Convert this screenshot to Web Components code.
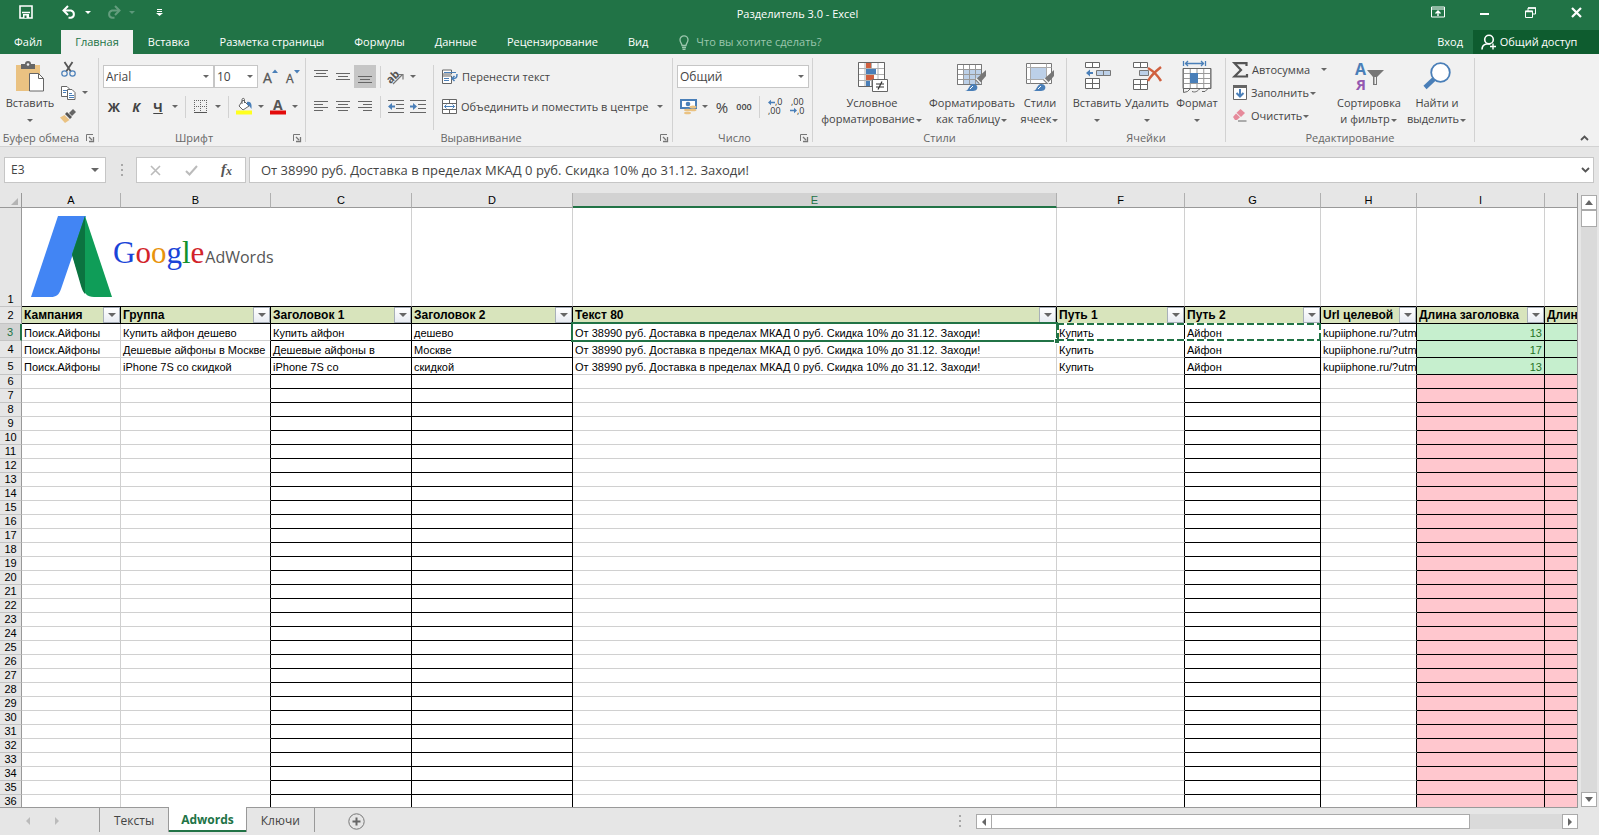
<!DOCTYPE html>
<html lang="ru">
<head>
<meta charset="utf-8">
<title>Разделитель 3.0 - Excel</title>
<style>
html, body { margin: 0; height: 100%; }
body { font: 11px/16px "Open Sans", "Noto Sans", sans-serif; color: #444; overflow: hidden; }
</style>
</head>
<body>
<excel-app></excel-app>
<script>
const BASE = `
  *, *::before, *::after { box-sizing: border-box; }
  button, input, select { font: inherit; color: inherit; margin: 0; padding: 0; border: 0; background: none; border-radius: 0; outline: 0; }
  button { display: inline-flex; align-items: center; justify-content: center; cursor: pointer; white-space: nowrap; }
`;
const define = (name, css, html) => customElements.define(name, class extends HTMLElement {
  constructor() { super(); this.attachShadow({ mode: 'open' }); }
  connectedCallback() {
    this.shadowRoot.innerHTML = `<style>${BASE}${css}</style>${typeof html === 'function' ? html(this) : html}`;
  }
});

/* ---------- icons: [width, height, markup] ---------- */
const grid = (x, y, cols, rows, w, h) => {
  let d = '';
  for (let i = 0; i <= cols; i++) d += `M${x + i * w} ${y}v${rows * h}`;
  for (let j = 0; j <= rows; j++) d += `M${x} ${y + j * h}h${cols * w}`;
  return d;
};
const lines = rows => rows.map(([x, y, w]) => `<path d="M${x} ${y}.5h${w}" stroke="#666"/>`).join('');
const brush = `<path d="M29 9v6l-7 8-4-4z" fill="#777"/><path d="M19 17.500l5 5" stroke="#f1f1f1" stroke-width="1.500"/><path d="M8 30c3 0 3-3 5-5 2-3 6-2 7 0s0 5-4 5z" fill="#4a7fb8"/><path d="M13 28l3-3" stroke="#fff"/>`;
const ICONS = {
  save: [14, 14, '<path d="M1 1h12v12H1z" fill="none" stroke="#fff" stroke-width="1.600"/><path d="M3 7.500h8" stroke="#fff" stroke-width="1.500"/><path d="M4 9h6v4H4z" fill="#fff"/><path d="M5.500 10.500h2V13h-2z" fill="#217346"/>'],
  undo: [15, 14, '<path d="M2 5.500h7a4 3.800 0 0 1 0 7.300H6.500" fill="none" stroke="#fff" stroke-width="2"/><path d="M6 1L1.500 5.500 6 10" fill="none" stroke="#fff" stroke-width="2"/>'],
  redo: [15, 14, '<g opacity=".3"><path d="M13 5.500H6a4 3.800 0 0 0 0 7.300h2.500" fill="none" stroke="#fff" stroke-width="2"/><path d="M9 1l4.500 4.500L9 10" fill="none" stroke="#fff" stroke-width="2"/></g>'],
  custom: [7, 7, '<path d="M1 .500h5M1 2.500h5" stroke="#fff"/><path d="M0 4h7L3.500 7z" fill="#fff"/>'],
  display: [14, 12, '<path d="M.500 1h13v10H.500zM.500 3h13" fill="none" stroke="#fff"/><path d="M7 10V5M4.500 7.500L7 5l2.500 2.500" fill="none" stroke="#fff" stroke-width="1.400"/>'],
  min: [10, 10, '<path d="M1 7h9" stroke="#fff" stroke-width="2"/>'],
  restore: [11, 11, '<path d="M.500 4h7v6.500h-7zM3 4V1h7.500v6H8" fill="none" stroke="#fff"/><path d="M3 1h8M0 4.500h8" stroke="#fff" stroke-width="1.500"/>'],
  close: [11, 11, '<path d="M1 1l9 9M10 1l-9 9" stroke="#fff" stroke-width="2.200"/>'],
  bulb: [10, 15, '<path d="M3 10.500C3 8.500 1 7.500 1 4.800a4 4 0 0 1 8 0c0 2.700-2 3.700-2 5.700zM3 12.500h4M3.500 14.300h3" fill="none" stroke="#9cc7ae" stroke-width="1.300"/>'],
  person: [16, 17, '<circle cx="8" cy="5.500" r="4.300" fill="none" stroke="#fff" stroke-width="1.600"/><path d="M1 15.500c0-3 2-5 4.500-5.500h4" fill="none" stroke="#fff" stroke-width="1.600"/><path d="M12 9.500v6M9 12.500h6" stroke="#fff" stroke-width="1.400"/>'],
  paste: [30, 32, '<path d="M1 4h24v26H1z" fill="#eac282"/><path d="M6 3h4a3 3 0 0 1 6 0h4v5H6z" fill="#666"/><circle cx="13" cy="3.500" r="1.300" fill="#f1f1f1"/><path d="M14.500 12.500h9l5 5v12.500h-14z" fill="#fff" stroke="#666"/><path d="M23.500 12.500v5h5" fill="none" stroke="#666"/>'],
  cut: [15, 15, '<path d="M3.500 0L9.800 9.500M11.500 0L5.200 9.500" stroke="#555" stroke-width="1.800"/><circle cx="3.500" cy="11.500" r="2.700" fill="none" stroke="#4a7fb8" stroke-width="1.200"/><circle cx="11.500" cy="11.500" r="2.700" fill="none" stroke="#4a7fb8" stroke-width="1.200"/>'],
  copy: [15, 14, '<path d="M.500.500h5.500l3 3v7H.500z" fill="#fff" stroke="#666"/><path d="M2 4.500h4M2 6.500h3" stroke="#4a7fb8"/><path d="M6.500 3.500H11l3 3v7H6.500z" fill="#fff" stroke="#666"/><path d="M8 7.500h3M8 9.500h5M8 11.500h5" stroke="#4a7fb8"/>'],
  painter: [16, 14, '<path d="M13 0l3 3-4 4-3-3z" fill="#666"/><path d="M7 3l5 5-2 2-5-5z" fill="#555"/><path d="M4.500 6l5 5-4.500 3L0 8.500z" fill="#eac282"/>'],
  grow: [15, 16, '<path d="M10 4l3-3.500L16 4z" fill="#4a7fb8"/><text x="1" y="14" font-size="14" fill="#555" stroke="#555" stroke-width=".3">A</text>'],
  shrink: [14, 16, '<path d="M10 1h6l-3 3.500z" fill="#4a7fb8"/><text x="2" y="14" font-size="12" fill="#555" stroke="#555" stroke-width=".3">A</text>'],
  borders: [14, 14, '<path d="M.500 0v13M6.500 0v13M12.500 0v13M0 .500h13M0 6.500h13" fill="none" stroke="#666" stroke-dasharray="1 1"/><path d="M0 12.500h13" stroke="#555"/>'],
  fill: [17, 17, '<path d="M7 2l6 6-6 4-4-4z" fill="#fff" stroke="#666"/><path d="M6 6V1.500C6 0 8.500 0 8.500 1.500V5" fill="none" stroke="#666"/><path d="M11 4c4-1 5 2 4.500 7C14 9 13 7 11 7z" fill="#4a7fb8"/><path d="M0 12.500h16v4H0z" fill="#ffff1e"/>'],
  color: [16, 17, '<text x="3" y="12" font-size="14" font-weight="bold" fill="#555">A</text><path d="M0 12.500h16v4H0z" fill="#e30b0b"/>'],
  alTop: [14, 14, lines([[0, 0, 14], [2, 3, 10], [0, 6, 14]])],
  alMid: [14, 14, lines([[0, 3, 14], [2, 6, 10], [0, 9, 14]])],
  alBot: [14, 14, lines([[0, 6, 14], [2, 9, 10], [0, 12, 14]])],
  left: [14, 14, lines([[0, 1, 14], [0, 4, 9], [0, 7, 14], [0, 10, 9]])],
  center: [14, 14, lines([[0, 1, 14], [2, 4, 10], [0, 7, 14], [2, 10, 10]])],
  right: [14, 14, lines([[0, 1, 14], [5, 4, 9], [0, 7, 14], [5, 10, 9]])],
  orient: [18, 16, '<text x="0" y="11" font-size="11" font-weight="bold" fill="#555" transform="rotate(-45 7 9)">ab</text><path d="M6 15l9-9M11 5.500h5v5" fill="none" stroke="#777" stroke-width="1.200"/>'],
  outdent: [17, 14, lines([[0, 0, 16], [8, 4, 8], [8, 8, 8], [0, 12, 16]]) + '<path d="M0 6.500L4 3v2.500h3v2H4V10z" fill="#4a7fb8"/>'],
  indent: [17, 14, lines([[0, 0, 16], [8, 4, 8], [8, 8, 8], [0, 12, 16]]) + '<path d="M7 6.500L3 3v2.500H0v2h3V10z" fill="#4a7fb8"/>'],
  wrap: [16, 16, '<path d="M.500 1v13.500h9V7h-9M.500 1h9v4h-9" fill="#fff" stroke="#666"/><path d="M2 3.500h12M2 9.500h5M2 11.500h5" stroke="#4a7fb8"/><path d="M15 5c0 4-1 4.500-4.500 4.500M12.500 7L10 9.500l2.500 2.500" fill="none" stroke="#4a7fb8" stroke-width="1.500"/>'],
  merge: [15, 15, '<path d="M.500.500h14v14H.500zM.500 4.500h14M.500 10.500h14M7.500.500v4M7.500 10.500v4" fill="#fff" stroke="#666"/><path d="M2.500 7.500h10M4.500 5.500l-2 2 2 2M10.500 5.500l2 2-2 2" fill="none" stroke="#4a7fb8"/>'],
  money: [17, 16, '<path d="M1 1h15v8H1z" fill="#fff" stroke="#4a7fb8" stroke-width="2"/><circle cx="8" cy="5" r="2.300" fill="#4a7fb8"/><ellipse cx="13" cy="8" rx="3.500" ry="1.500" fill="#eac282"/><ellipse cx="13" cy="11" rx="3.500" ry="1.300" fill="#eac282"/><ellipse cx="7.500" cy="11" rx="3.500" ry="1.300" fill="#eac282"/><ellipse cx="7.500" cy="14" rx="3.500" ry="1.300" fill="#eac282"/>'],
  decInc: [15, 15, '<path d="M0 3.500L3 .800v1.900h4v1.600H3v1.900z" fill="#4a7fb8"/><text x="7" y="6" font-size="9" fill="#333">,0</text><text x="0" y="15" font-size="9" fill="#333">,00</text>'],
  decDec: [15, 15, '<text x="1" y="6" font-size="9" fill="#333">,00</text><path d="M7 11.500L4 8.800v1.900H0v1.600h4v1.900z" fill="#4a7fb8"/><text x="7" y="15" font-size="9" fill="#333">,0</text>'],
  cond: [32, 32, `<path d="M2 2h26v24H2z" fill="#fff"/><path d="${grid(2.5, 1.5, 4, 4, 6.5, 6)}" fill="none" stroke="#b0b0b0"/><path d="M2.500 1.500h26v24h-26z" fill="none" stroke="#666"/><path d="M10 2h5v5h-5zM10 14h8v5h-8z" fill="#d0603f"/><path d="M10 8h10v5H10zM10 20h4v5h-4z" fill="#4a7fb8"/><path d="M16.500 18.500h15v12h-15z" fill="#fff" stroke="#666"/><path d="M20 23h8M20 26h8M26 20.500l-4 8" stroke="#333" stroke-width="1.200"/>`],
  table: [30, 32, `<path d="M.500 3.500h24v20h-24z" fill="#fff"/><path d="M7 9h18v15H7z" fill="#bcd0e8"/><path d="${grid(0.5, 3.5, 4, 4, 6, 5)}" fill="none" stroke="#999"/><path d="M.500 3.500h24v20h-24z" fill="none" stroke="#777"/>${brush}`],
  cells: [30, 32, `<path d="M1.500 2.500h25v20h-25z" fill="#fff" stroke="#777"/><path d="M1.500 6.500h25M1.500 18.500h25M5.500 2.500v20M21.500 2.500v20" stroke="#aaa"/><path d="M6 7h15v11H6z" fill="#bcd0e8"/>${brush}`],
  insert: [28, 32, `<path d="M2 1h15v6H2zM2 17h15v11H2z" fill="#fff"/><path d="${grid(2.5, 1.5, 2, 1, 7, 5)}${grid(2.5, 17.5, 2, 2, 7, 5)}" fill="none" stroke="#666"/><path d="M13.500 9.500h14v5h-14z" fill="#bcd0e8" stroke="#777"/><path d="M20.500 9.500v5" stroke="#777"/><path d="M3 12l4-3.500v2.500h3v2H7v2.500z" fill="#4a7fb8"/>`],
  remove: [30, 32, `<path d="M1 1h15v6H1zM1 18h15v11H1z" fill="#fff"/><path d="${grid(1.500, 1.500, 2, 1, 7, 5)}${grid(1.500, 18.500, 2, 2, 7, 5)}" fill="none" stroke="#666"/><path d="M7.500 9.500h9v5h-9z" fill="#bcd0e8" stroke="#777"/><path d="M16 7c5 3 10 8 13 13M29 6c-5 4-10 8-13 14" fill="none" stroke="#d0603f" stroke-width="2.500"/>`],
  format: [30, 32, `<path d="M1.500 0v5M23.500 0v5M3 2.500h19M6 0L3.500 2.500 6 5M19 0l2.500 2.500L19 5" fill="none" stroke="#4a7fb8" stroke-width="1.300"/><path d="M1.500 7.500h27v20h-27z" fill="#fff"/><path d="${grid(1.5, 7.5, 4, 4, 6.75, 5)}" fill="none" stroke="#999"/><path d="M8 12h8v10H8z" fill="#4a7fb8"/><path d="M1 27.500h28v-20H1zM1.500 27v4.500l4-1 3-3M10 30.500c4 1.500 6-1 8-3M20 30.500h3l4-4" fill="none" stroke="#666"/>`],
  sigma: [15, 16, '<path d="M13.500 4V1.200H1.500L8 8l-6.500 6.500h12.500V12" fill="none" stroke="#555" stroke-width="2.200"/>'],
  filldown: [14, 15, '<path d="M.500.500h13v14H.500z" fill="#fff" stroke="#666"/><path d="M0 0h14v3H0z" fill="#666"/><path d="M7 4v7M3.500 8L7 11.500 10.500 8" fill="none" stroke="#4a7fb8" stroke-width="2"/>'],
  eraser: [14, 13, '<path d="M7.500 0L12 4 8 8 3.500 3.800z" fill="#e68a9b"/><path d="M3 4.500L7 8.300 4 11H2L0 8z" fill="#e68a9b"/><path d="M5 12h8.500" stroke="#666"/>'],
  sort: [30, 32, '<text x="1" y="14" font-size="16" font-weight="bold" fill="#4a7fb8">А</text><text x="2" y="29" font-size="15" font-weight="bold" fill="#9458b0">Я</text><path d="M13 9h17l-7 7v8h-4v-8z" fill="#777"/><path d="M20.500 16h1.500v7h-1.500z" fill="#f1f1f1"/>'],
  find: [28, 32, '<circle cx="17.500" cy="11.500" r="9.300" fill="#fff" stroke="#4a7fb8" stroke-width="1.800"/><path d="M11 18l-9 8.500" stroke="#4a7fb8" stroke-width="4.500"/>'],
  launcher: [8, 8, '<path d="M.500 7V.500H7" fill="none" stroke="#777"/><path d="M3 3l3 3M7.500 3v4.500H3" fill="none" stroke="#777" stroke-width="1.300"/>'],
  collapse: [9, 6, '<path d="M1 5l3.500-3.500L8 5" fill="none" stroke="#555" stroke-width="1.800"/>'],
  expand: [9, 6, '<path d="M1 1l3.500 3.500L8 1" fill="none" stroke="#555" stroke-width="1.800"/>'],
  cancel: [11, 11, '<path d="M1 1l9 9M10 1l-9 9" stroke="#bbb" stroke-width="1.600"/>'],
  ok: [13, 11, '<path d="M1 6l3.500 3.500L12 1" fill="none" stroke="#bbb" stroke-width="2"/>'],
  fx: [14, 16, '<text x="1" y="12" font-family="Liberation Serif, serif" font-size="15" font-style="italic" font-weight="bold" fill="#555">f</text><text x="6" y="13" font-family="Liberation Serif, serif" font-size="12" font-style="italic" font-weight="bold" fill="#555">x</text>'],
  dots: [3, 12, '<path d="M1 0h2v2H1zM1 5h2v2H1zM1 10h2v2H1z" fill="#a8a8a8"/>'],
  corner: [7, 7, '<path d="M7 0v7H0z" fill="#b4b4b4"/>'],
  tLeft: [4, 8, '<path d="M4 0v8L0 4z" fill="currentColor"/>'],
  tRight: [4, 8, '<path d="M0 0v8l4-4z" fill="currentColor"/>'],
  tUp: [8, 5, '<path d="M0 5h8L4 0z" fill="currentColor"/>'],
  tDown: [8, 5, '<path d="M0 0h8L4 5z" fill="currentColor"/>'],
  plus: [17, 17, '<circle cx="8.500" cy="8.500" r="7.700" fill="none" stroke="#777"/><path d="M8.500 4.500v8M4.500 8.500h8" stroke="#666" stroke-width="2"/>'],
  adwords: [82, 82, '<path d="M27 0h28L42 38 30 73c-2 6-5 8-10 8H0z" fill="#4285f4"/><path d="M54 0l27 81H63c-7 0-10-4-12-10L41 38z" fill="#0f9d58"/><path d="M54 0v78c-2-2-3-5-4-8L41 39z" fill="#0b7340"/>']
};
define('xl-icon', ':host{display:inline-flex;flex:none} svg{display:block;overflow:visible}', el => {
  const [w, h, body] = ICONS[el.getAttribute('name')];
  return `<svg width="${w}" height="${h}" viewBox="0 0 ${w} ${h}" aria-hidden="true">${body}</svg>`;
});
define('xl-caret', `:host{display:inline-block;flex:none;vertical-align:middle;border:3px solid transparent;border-top-color:#666;border-bottom:0;margin:0 1px}`, '');

/* ---------- title bar and tabs ---------- */
define('title-bar', `
  :host { display: grid; grid-template-columns: 1fr auto 1fr; align-items: center; height: 30px; background: #217346; color: #fff; }
  .quick { display: flex; align-items: center; padding: 0 0 6px 15px; }
  .quick button { width: 22px; height: 24px; }
  .quick .gap { margin-left: 21px; } .quick .arrow { width: 12px; margin-left: 2px; } .quick .near { margin-left: 8px; }
  .quick .last { margin-left: 10px; }
  xl-caret { border-top-color: #fff; } .dim xl-caret { border-top-color: #5d987a; }
  .win { display: flex; justify-content: flex-end; padding-bottom: 6px; }
  .win button { width: 46px; height: 24px; }
  h1 { margin: 0; font: inherit; padding: 0 4px 3px 0; }
`, `
  <div class="quick">
    <button aria-label="Сохранить"><xl-icon name="save"></xl-icon></button>
    <button class="gap" aria-label="Отменить"><xl-icon name="undo"></xl-icon></button>
    <button class="arrow" aria-label="Список отмены"><xl-caret></xl-caret></button>
    <button class="near" aria-label="Вернуть"><xl-icon name="redo"></xl-icon></button>
    <button class="arrow dim" aria-label="Список возврата"><xl-caret></xl-caret></button>
    <button class="last" aria-label="Настройка панели"><xl-icon name="custom"></xl-icon></button>
  </div>
  <h1>Разделитель 3.0 - Excel</h1>
  <div class="win">
    <button aria-label="Параметры ленты"><xl-icon name="display"></xl-icon></button>
    <button aria-label="Свернуть"><xl-icon name="min"></xl-icon></button>
    <button aria-label="Восстановить"><xl-icon name="restore"></xl-icon></button>
    <button aria-label="Закрыть"><xl-icon name="close"></xl-icon></button>
  </div>`);
define('ribbon-tabs', `
  :host { display: flex; height: 24px; background: #217346; color: #fff; }
  nav { display: flex; }
  nav button { padding: 0 15px; }
  nav button:first-child { padding: 0 19px 0 14px; }
  nav .on { background: #f1f1f1; color: #217346; padding: 0 14px; }
  label { display: flex; align-items: center; gap: 7px; padding-left: 16px; flex: 1; }
  input { flex: 1; min-width: 0; max-width: 220px; } input::placeholder { color: #9cc7ae; opacity: 1; }
  .in { padding: 0 10px; } .share { width: 126px; background: #0e5c2f; gap: 3px; padding-right: 14px; }
`, `
  <nav role="tablist"><button role="tab">Файл</button><button role="tab" class="on" aria-selected="true">Главная</button><button role="tab">Вставка</button><button role="tab">Разметка страницы</button><button role="tab">Формулы</button><button role="tab">Данные</button><button role="tab">Рецензирование</button><button role="tab">Вид</button></nav>
  <label><xl-icon name="bulb"></xl-icon><input placeholder="Что вы хотите сделать?" aria-label="Что вы хотите сделать?"></label>
  <button class="in">Вход</button>
  <button class="share"><xl-icon name="person"></xl-icon>Общий доступ</button>`);

/* ---------- ribbon parts ---------- */
define('ribbon-group', `
  :host { display: flex; flex: none; height: 92px; }
  section { flex: 1; min-width: 0; display: flex; flex-direction: column; padding-top: 4px; }
  .body { flex: 1; display: flex; align-items: flex-start; }
  footer { display: flex; align-items: center; height: 16px; color: #666; }
  span { flex: 1; text-align: center; white-space: nowrap; }
  footer button { width: 16px; height: 16px; }
  i { width: 1px; margin: 4px 0; background: #d2d2d2; }
`, el => `<section><div class="body"><slot></slot></div><footer><span>${el.getAttribute('label')}</span>${
  el.hasAttribute('launcher') ? '<button aria-label="Параметры"><xl-icon name="launcher"></xl-icon></button>' : ''}</footer></section><i></i>`);
define('tool-button', `
  :host { display: inline-flex; flex: none; width: 22px; height: 23px; }
  :host([pressed]) { background: #c6c6c6; }
  :host([wide]) { width: auto; }
  button { width: 100%; gap: 4px; }
`, el => `<button aria-label="${el.getAttribute('tip') || ''}"><slot></slot></button>`.replace(' aria-label=""', ''));
define('big-button', `
  :host { display: block; flex: none; }
  button { width: 100%; flex-direction: column; justify-content: flex-start; padding-top: 3px; text-align: center; }
  .icon { display: flex; height: 34px; }
`, el => `<button><span class="icon"><xl-icon name="${el.getAttribute('icon')}"></xl-icon></span><span><slot></slot></span></button>`);
define('combo-box', `
  :host { display: flex; flex: none; position: relative; height: 23px; background: #fff; border: 1px solid #c6c6c6; }
  select { flex: 1; appearance: none; padding: 0 4px 0 2px; width: 100%; font-size: 12px; }
  xl-caret { position: absolute; right: 3px; top: 9px; pointer-events: none; }
`, el => `<select aria-label="${el.getAttribute('tip')}"><option>${el.getAttribute('value')}</option></select><xl-caret></xl-caret>`);

const tool = (icon, tip, attr = '') => `<tool-button tip="${tip}" ${attr}><xl-icon name="${icon}"></xl-icon></tool-button>`;
const drop = tip => `<tool-button class="drop" tip="${tip}"><xl-caret></xl-caret></tool-button>`;
define('ribbon-bar', `
  :host { display: flex; height: 93px; background: #f1f1f1; border-bottom: 1px solid #d2d2d2; }
  .drop { width: 12px; }
  .stack { display: flex; flex-direction: column; align-items: flex-start; }
  .rows { display: flex; flex-direction: column; gap: 7px; padding: 7px 0 0 4px; }
  .row { display: flex; align-items: center; }
  .bar { width: 1px; height: 22px; margin: 0 4px; background: #d2d2d2; }
  .tall { height: auto; align-self: stretch; margin: 7px 4px 0; }
  .letter { font-size: 13px; } b, u, em { font-weight: bold; }
  .clip { width: 99px; } .font { width: 207px; } .align { width: 367px; } .num { width: 140px; }
  .styles { width: 254px; } .cells { width: 159px; } .edit { width: 249px; }
  .paste { width: 57px; padding-left: 3px; } .w110 { width: 110px; } .w90 { width: 90px; } .w44 { width: 46px; } .w50 { width: 50px; } .w70 { width: 70px; } .w66 { width: 66px; }
  .pad { padding-left: 4px; display: flex; } .cells .pad { padding-left: 5px; }
  .tools { width: 104px; padding-left: 3px; } .name { width: 111px; } .size { width: 44px; } .fmt { width: 132px; }
  .pct { font-size: 15px; } .thousand { font-size: 9px; font-weight: 600; }
  .mergedrop { margin-left: 6px; } .sum { margin-left: 8px; }
  .end { flex: 1; display: flex; justify-content: flex-end; align-items: flex-end; padding-right: 5px; }
  .end button { width: 20px; height: 16px; }
`, `
  <ribbon-group class="clip" label="Буфер обмена" launcher>
    <big-button class="paste" icon="paste">Вставить<br><xl-caret></xl-caret></big-button>
    <div class="stack">${tool('cut', 'Вырезать')}<div class="row">${tool('copy', 'Копировать')}${drop('Копировать')}</div>${tool('painter', 'Формат по образцу')}</div>
  </ribbon-group>
  <ribbon-group class="font" label="Шрифт" launcher><div class="rows">
    <div class="row"><combo-box class="name" value="Arial" tip="Шрифт"></combo-box><combo-box class="size" value="10" tip="Размер"></combo-box>${tool('grow', 'Увеличить')}${tool('shrink', 'Уменьшить')}</div>
    <div class="row"><tool-button class="letter"><b>Ж</b></tool-button><tool-button class="letter"><em>К</em></tool-button><tool-button class="letter"><u>Ч</u></tool-button>${drop('Подчёркивание')}<span class="bar"></span>${tool('borders', 'Границы')}${drop('Границы')}<span class="bar"></span>${tool('fill', 'Заливка')}${drop('Заливка')}${tool('color', 'Цвет текста')}${drop('Цвет текста')}</div>
  </div></ribbon-group>
  <ribbon-group class="align" label="Выравнивание" launcher>
    <div class="rows">
      <div class="row">${tool('alTop', 'По верхнему краю')}${tool('alMid', 'По середине')}${tool('alBot', 'По нижнему краю', 'pressed')}<span class="bar"></span>${tool('orient', 'Ориентация')}${drop('Ориентация')}</div>
      <div class="row">${tool('left', 'Слева')}${tool('center', 'По центру')}${tool('right', 'Справа')}<span class="bar"></span>${tool('outdent', 'Уменьшить отступ')}${tool('indent', 'Увеличить отступ')}</div>
    </div>
    <span class="bar tall"></span>
    <div class="rows">
      <div class="row"><tool-button wide><xl-icon name="wrap"></xl-icon>Перенести текст</tool-button></div>
      <div class="row"><tool-button wide><xl-icon name="merge"></xl-icon>Объединить и поместить в центре</tool-button><span class="mergedrop"></span>${drop('Объединить')}</div>
    </div>
  </ribbon-group>
  <ribbon-group class="num" label="Число" launcher><div class="rows">
    <combo-box class="fmt" value="Общий" tip="Числовой формат"></combo-box>
    <div class="row">${tool('money', 'Финансовый формат')}${drop('Финансовый формат')}<tool-button class="pct">%</tool-button><tool-button class="thousand">000</tool-button><span class="bar"></span>${tool('decInc', 'Увеличить разрядность')}${tool('decDec', 'Уменьшить разрядность')}</div>
  </div></ribbon-group>
  <ribbon-group class="styles" label="Стили"><div class="pad">
    <big-button class="w110" icon="cond">Условное<br>форматирование<xl-caret></xl-caret></big-button>
    <big-button class="w90" icon="table">Форматировать<br>как таблицу<xl-caret></xl-caret></big-button>
    <big-button class="w44" icon="cells">Стили<br>ячеек<xl-caret></xl-caret></big-button>
  </div></ribbon-group>
  <ribbon-group class="cells" label="Ячейки"><div class="pad">
    <big-button class="w50" icon="insert">Вставить<br><xl-caret></xl-caret></big-button>
    <big-button class="w50" icon="remove">Удалить<br><xl-caret></xl-caret></big-button>
    <big-button class="w50" icon="format">Формат<br><xl-caret></xl-caret></big-button>
  </div></ribbon-group>
  <ribbon-group class="edit" label="Редактирование">
    <div class="pad"><div class="stack tools">
      <div class="row"><tool-button wide><xl-icon name="sigma"></xl-icon>Автосумма</tool-button><span class="sum"></span>${drop('Автосумма')}</div>
      <tool-button wide><xl-icon name="filldown"></xl-icon><span>Заполнить<xl-caret></xl-caret></span></tool-button>
      <tool-button wide><xl-icon name="eraser"></xl-icon><span>Очистить<xl-caret></xl-caret></span></tool-button>
    </div>
    <big-button class="w70" icon="sort">Сортировка<br>и фильтр<xl-caret></xl-caret></big-button>
    <big-button class="w66" icon="find">Найти и<br>выделить<xl-caret></xl-caret></big-button></div>
  </ribbon-group>
  <div class="end"><button aria-label="Свернуть ленту"><xl-icon name="collapse"></xl-icon></button></div>`);

/* ---------- formula bar ---------- */
define('formula-bar', `
  :host { display: flex; align-items: flex-start; height: 46px; padding: 10px 5px 0 4px; background: #e6e6e6; font-size: 13px; }
  .box { display: flex; align-items: center; height: 26px; background: #fff; border: 1px solid #c6c6c6; }
  .name { width: 102px; } .name input { flex: 1; min-width: 0; padding-left: 6px; font-size: 12px; } .name button { width: 20px; height: 24px; }
  .name xl-caret { border-width: 4px 4px 0; }
  .grip { display: flex; width: 30px; height: 26px; align-items: center; justify-content: center; }
  .fx { width: 110px; margin-right: 3px; justify-content: space-around; } .fx button { width: 30px; height: 24px; }
  .text { flex: 1; min-width: 0; } .text input { flex: 1; min-width: 0; padding-left: 11px; } .text button { width: 16px; height: 24px; }
`, `
  <div class="box name"><input value="E3" aria-label="Имя"><button aria-label="Список имён"><xl-caret></xl-caret></button></div>
  <span class="grip"><xl-icon name="dots"></xl-icon></span>
  <div class="box fx"><button aria-label="Отмена"><xl-icon name="cancel"></xl-icon></button><button aria-label="Ввод"><xl-icon name="ok"></xl-icon></button><button aria-label="Вставить функцию"><xl-icon name="fx"></xl-icon></button></div>
  <div class="box text"><input aria-label="Строка формул" value="От 38990 руб. Доставка в пределах МКАД 0 руб. Скидка 10% до 31.12. Заходи!"><button aria-label="Развернуть"><xl-icon name="expand"></xl-icon></button></div>`);

/* ---------- worksheet ---------- */
define('adwords-logo', `
  :host { display: flex; height: 98px; padding: 8px 0 0 9px; color: #555; white-space: nowrap; }
  p { display: flex; align-items: baseline; gap: 1px; margin: 19px 0 0; line-height: 36px; }
  .g { font-family: "Liberation Serif", serif; font-size: 31px; } .w { font: 16px "Open Sans", sans-serif; }
  .b { color: #1a44d8; } .r { color: #d2232a; } .y { color: #e8930c; } .n { color: #12922b; }
`, `<xl-icon name="adwords"></xl-icon><p><span class="g"><span class="b">G</span><span class="r">o</span><span class="y">o</span><span class="b">g</span><span class="n">l</span><span class="r">e</span></span><span class="w">AdWords</span></p>`);

const COLS = [['A', 99], ['B', 150], ['C', 141], ['D', 161], ['E', 484], ['F', 128], ['G', 136], ['H', 96], ['I', 128], ['J', 96]];
const HEADS = ['Кампания', 'Группа', 'Заголовок 1', 'Заголовок 2', 'Текст 80', 'Путь 1', 'Путь 2', 'Url целевой', 'Длина заголовка', 'Длина'];
const AD = 'От 38990 руб. Доставка в пределах МКАД 0 руб. Скидка 10% до 31.12. Заходи!';
const row = (b, c, d, n) => ['Поиск.Айфоны', b, c, d, AD, 'Купить', 'Айфон', 'kupiiphone.ru/?utm_', n, ''];
const DATA = [
  row('Купить айфон дешево', 'Купить айфон', 'дешево', 13),
  row('Дешевые айфоны в Москве', 'Дешевые айфоны в', 'Москве', 17),
  row('iPhone 7S со скидкой', 'iPhone 7S со', 'скидкой', 13)
];
const LAST_ROW = 36;
define('sheet-grid', `
  :host { display: block; flex: 1; min-width: 0; overflow: hidden; background: #fff; border-right: 1px solid #999; font: 11px/13px "Liberation Sans", Arial, sans-serif; color: #000; }
  table { table-layout: fixed; border-collapse: separate; border-spacing: 0; width: 1641px; }
  th, td { padding: 0 0 0 2px; overflow: hidden; white-space: nowrap; border: 0 solid #d0d0d0; border-width: 0 1px 1px 0; text-align: left; vertical-align: bottom; font-weight: normal; height: 14px; line-height: 13px; }
  thead th { height: 15px; background: #e6e6e6; border-color: #999; text-align: center; vertical-align: middle; line-height: 12px; padding: 0; }
  thead th:not(:first-child) { border-right-color: #b0b0b0; }
  thead th.on { background: #d2d2d2; color: #217346; border-bottom: 2px solid #217346; }
  thead th:first-child { padding: 3px 3px 0 11px; line-height: 7px; } thead th xl-icon { display: block; }
  tbody th { background: #e6e6e6; border-color: #c4c4c4; border-right-color: #999; text-align: center; padding: 0; }
  tbody th.on { background: #d2d2d2; color: #217346; border-right: 2px solid #217346; }
  .r1 th, .r1 td { height: 99px; } .r1 td { border-bottom-color: #000; } .r1 .art { padding: 0; vertical-align: top; }
  .mid th, .mid td { height: 17px; line-height: 14px; } .mid th { vertical-align: middle; }
  .head td { background: #d8e4bc; border-color: #000; padding: 0 0 0 2px; font-weight: bold; font-size: 12px; vertical-align: top; }
  .head td div { display: flex; justify-content: space-between; height: 16px; line-height: 17px; }
  .head span { flex: 1; min-width: 0; overflow: hidden; }
  .head button { width: 17px; height: 16px; flex: none; border: 1px solid #a8b0b8; background: linear-gradient(#fff, #e8ebf2); }
  .head xl-caret { border-width: 4px 4px 0; }
  .edge { border-right-color: #000; } .boxed { border-color: #000; }
  .num { text-align: right; padding-right: 2px; } .ok { background: #c6efce; color: #267326; } .bad { background: #ffc7ce; }
  .over { position: relative; overflow: visible; }
  .cursor { position: absolute; inset: -2px -2px -2px -2px; border: 2px solid #217346; pointer-events: none; }
  .cursor::after { content: ""; position: absolute; right: -4px; bottom: -4px; width: 6px; height: 6px; background: #217346; border: 1px solid #fff; }
  .ants { position: absolute; top: -1px; left: 0; width: 264px; height: 18px; pointer-events: none;
    --h: repeating-linear-gradient(90deg, #217346 0 7px, #fff 7px 10px); --v: repeating-linear-gradient(#217346 0 7px, #fff 7px 10px);
    background: var(--h) 0 0 / 100% 2px no-repeat, var(--h) 0 100% / 100% 2px no-repeat, var(--v) 0 0 / 2px 100% no-repeat, var(--v) 100% 0 / 2px 100% no-repeat; }
`, () => {
  const cls = (c, r) => {
    const a = [];
    if ('BFH'.includes(COLS[c][0])) a.push('edge');
    if ('CDGIJ'.includes(COLS[c][0])) a.push('boxed');
    if (c >= 8) a.push(r <= 5 ? 'ok' : 'bad', 'num');
    if (r === 3 && (c === 4 || c === 5)) a.push('over');
    return a.join(' ');
  };
  let body = `<tr class="r1"><th>1</th><td class="art" colspan="3"><adwords-logo></adwords-logo></td>${'<td></td>'.repeat(7)}</tr>`;
  body += `<tr class="mid head"><th>2</th>${HEADS.map(h => `<td><div><span>${h}</span><button aria-label="Фильтр: ${h}"><xl-caret></xl-caret></button></div></td>`).join('')}</tr>`;
  for (let r = 3; r <= LAST_ROW; r++) {
    const d = DATA[r - 3];
    body += `<tr${d ? ' class="mid"' : ''}><th${r === 3 ? ' class="on"' : ''}>${r}</th>${COLS.map((_, c) =>
      `<td class="${cls(c, r)}">${d ? d[c] : ''}${r === 3 && c === 4 ? '<i class="cursor"></i>' : ''}${r === 3 && c === 5 ? '<i class="ants"></i>' : ''}</td>`).join('')}</tr>`;
  }
  return `<table><colgroup><col style="width:22px">${COLS.map(c => `<col style="width:${c[1]}px">`).join('')}</colgroup>
    <thead><tr><th><xl-icon name="corner"></xl-icon></th>${COLS.map(([n]) => `<th${n === 'E' ? ' class="on"' : ''}>${n === 'J' ? '' : n}</th>`).join('')}</tr></thead><tbody>${body}</tbody></table>`;
});
define('scroll-strip', `
  :host { display: flex; background: #dadada; color: #666; }
  :host([vertical]) { flex-direction: column; }
  button { flex: none; width: 16px; height: 15px; background: #fff; border: 1px solid #aaa; }
  .thumb { background: #fff; border: 1px solid #aaa; }
  :host([vertical]) .thumb { height: 17px; } :host(:not([vertical])) .thumb { width: 84%; margin-left: -1px; }
  .track { flex: 1; display: flex; min-width: 0; } :host([vertical]) .track { flex-direction: column; }
`, el => {
  const v = el.hasAttribute('vertical');
  return `<button aria-label="Назад"><xl-icon name="${v ? 'tUp' : 'tLeft'}"></xl-icon></button><div class="track"><div class="thumb"></div></div><button aria-label="Вперёд"><xl-icon name="${v ? 'tDown' : 'tRight'}"></xl-icon></button>`;
});
define('sheet-tabs', `
  :host { display: flex; height: 28px; background: #e6e6e6; font-size: 12px; padding-right: 21px; }
  .nav { display: flex; width: 99px; padding: 0 0 2px 13px; color: #bbb; border-top: 1px solid #999; } .nav button { width: 29px; }
  .tabs { display: flex; }
  .tabs button { height: 25px; padding: 1px 14px 0; border-top: 1px solid #999; }
  .tabs .first { border-left: 1px solid #999; } .tabs .last { border-right: 1px solid #999; }
  .tabs .on { background: #fff; color: #217346; font-weight: bold; padding: 1px 12px 0; border: solid #999; border-width: 0 1px; box-shadow: inset 0 -2px #217346; }
  .fill { flex: 1; border-top: 1px solid #999; padding: 3px 0 0 32px; min-width: 0; }
  .fill button { width: 20px; height: 20px; }
  .grip { border-top: 1px solid #999; padding: 7px 15px 0 0; }
  .hs { width: 602px; border-top: 1px solid #999; padding-top: 6px; }
`, `
  <div class="nav"><button aria-label="Предыдущий лист"><xl-icon name="tLeft"></xl-icon></button><button aria-label="Следующий лист"><xl-icon name="tRight"></xl-icon></button></div>
  <div class="tabs" role="tablist"><button class="first" role="tab">Тексты</button><button class="on" role="tab" aria-selected="true">Adwords</button><button class="last" role="tab">Ключи</button></div>
  <div class="fill"><button aria-label="Новый лист"><xl-icon name="plus"></xl-icon></button></div>
  <div class="grip"><xl-icon name="dots"></xl-icon></div>
  <div class="hs"><scroll-strip></scroll-strip></div>`);
define('excel-app', `
  :host { display: flex; flex-direction: column; height: 100vh; background: #e6e6e6; }
  title-bar, ribbon-tabs, ribbon-bar, formula-bar, sheet-tabs { flex: none; }
  main { flex: 1; min-height: 0; display: flex; overflow: hidden; }
  aside { display: flex; width: 21px; padding: 2px 2px 0 3px; } aside scroll-strip { flex: 1; }
`, `<title-bar></title-bar><ribbon-tabs></ribbon-tabs><ribbon-bar></ribbon-bar><formula-bar></formula-bar>
  <main><sheet-grid></sheet-grid><aside><scroll-strip vertical></scroll-strip></aside></main>
  <sheet-tabs></sheet-tabs>`);
</script>
</body>
</html>
